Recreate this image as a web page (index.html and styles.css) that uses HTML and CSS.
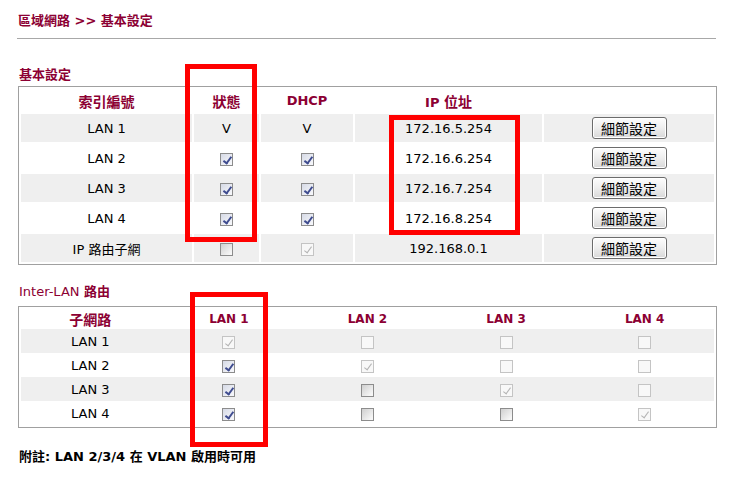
FILE: index.html
```html
<!DOCTYPE html>
<html lang="zh-Hant">
<head>
    <meta charset="UTF-8">
    <title>區域網路 &gt;&gt; 基本設定</title>
    <link rel="stylesheet" href="styles.css">
</head>
<body>
    <div class="page">
        <h1 class="title">區域網路 &gt;&gt; 基本設定</h1>
        <hr class="rule">

        <h2 class="section">基本設定</h2>
        <table class="grid basic">
            <thead>
                <tr>
                    <th class="c-idx"><span class="zh">索引編號</span></th>
                    <th class="c-state"><span class="zh">狀態</span></th>
                    <th class="c-dhcp">DHCP</th>
                    <th class="c-ip">IP <span class="zh">位址</span></th>
                    <th></th>
                </tr>
            </thead>
            <tbody>
                <tr class="odd">
                    <td>LAN 1</td>
                    <td>V</td>
                    <td>V</td>
                    <td>172.16.5.254</td>
                    <td><button class="btn">細節設定</button></td>
                </tr>
                <tr>
                    <td>LAN 2</td>
                    <td><span class="cb on"></span></td>
                    <td><span class="cb on"></span></td>
                    <td>172.16.6.254</td>
                    <td><button class="btn">細節設定</button></td>
                </tr>
                <tr class="odd">
                    <td>LAN 3</td>
                    <td><span class="cb on"></span></td>
                    <td><span class="cb on"></span></td>
                    <td>172.16.7.254</td>
                    <td><button class="btn">細節設定</button></td>
                </tr>
                <tr>
                    <td>LAN 4</td>
                    <td><span class="cb on"></span></td>
                    <td><span class="cb on"></span></td>
                    <td>172.16.8.254</td>
                    <td><button class="btn">細節設定</button></td>
                </tr>
                <tr class="odd">
                    <td>IP 路由子網</td>
                    <td><span class="cb"></span></td>
                    <td><span class="cb on dis"></span></td>
                    <td>192.168.0.1</td>
                    <td><button class="btn">細節設定</button></td>
                </tr>
            </tbody>
        </table>

        <h2 class="section"><span class="lat">Inter-LAN</span> 路由</h2>
        <table class="grid inter">
            <thead>
                <tr>
                    <th><span class="zh">子網路</span></th>
                    <th>LAN 1</th>
                    <th>LAN 2</th>
                    <th>LAN 3</th>
                    <th>LAN 4</th>
                </tr>
            </thead>
            <tbody>
                <tr class="odd">
                    <td>LAN 1</td>
                    <td><span class="cb on dis"></span></td>
                    <td><span class="cb dis"></span></td>
                    <td><span class="cb dis"></span></td>
                    <td><span class="cb dis"></span></td>
                </tr>
                <tr>
                    <td>LAN 2</td>
                    <td><span class="cb on"></span></td>
                    <td><span class="cb on dis"></span></td>
                    <td><span class="cb dis"></span></td>
                    <td><span class="cb dis"></span></td>
                </tr>
                <tr class="odd">
                    <td>LAN 3</td>
                    <td><span class="cb on"></span></td>
                    <td><span class="cb"></span></td>
                    <td><span class="cb on dis"></span></td>
                    <td><span class="cb dis"></span></td>
                </tr>
                <tr>
                    <td>LAN 4</td>
                    <td><span class="cb on"></span></td>
                    <td><span class="cb"></span></td>
                    <td><span class="cb"></span></td>
                    <td><span class="cb on dis"></span></td>
                </tr>
            </tbody>
        </table>

        <p class="note">附註: LAN 2/3/4 在 VLAN 啟用時可用</p>

        <!-- red highlight frames drawn over the tables -->
        <div class="mark mark-state"></div>
        <div class="mark mark-ip"></div>
        <div class="mark mark-lan1"></div>
    </div>
</body>
</html>
```

FILE: styles.css
```css
* {
    margin: 0;
    padding: 0;
    box-sizing: border-box;
}

body {
    font-family: 'DejaVu Sans', 'Noto Sans CJK TC', sans-serif;
    font-size: 13px;
    color: #000;
    background: #fff;
}

.page {
    position: relative;
    padding: 13px 17px 0 17px;
    width: 733px;
    height: 479px;
}

.title {
    font-size: 13px;
    line-height: 16px;
    font-weight: bold;
    color: #8c0033;
    padding-left: 1px;
}

.rule {
    border: none;
    border-top: 1px solid #a8a8a8;
    margin-top: 9px;
}

.section {
    font-size: 13px;
    line-height: 16px;
    font-weight: bold;
    color: #8c0033;
    padding-left: 2px;
    margin-top: 28px;
}

.section .lat {
    font-weight: normal;
}

.zh {
    font-size: 14px;
}

.grid {
    width: 699px;
    margin-left: 1px;
    border: 1px solid #a0a0a0;
    table-layout: fixed;
    text-align: center;
}

.grid th {
    color: #8c0033;
    font-weight: bold;
    padding: 0;
}

.grid td {
    padding: 0;
    vertical-align: middle;
}

.grid tr.odd td {
    background: #efefef;
}

/* basic settings table */
.basic {
    margin-top: 3px;
    border-spacing: 2px;
}

.basic th {
    height: 23px;
    font-size: 13px;
}

.basic td {
    height: 28px;
}

.basic .c-idx { width: 171px; }
.basic .c-state { width: 65px; }
.basic .c-dhcp { width: 92px; }
.basic .c-ip { width: 187px; }

.btn {
    width: 75px;
    height: 22px;
    font-family: 'Noto Sans CJK TC', sans-serif;
    font-size: 14px;
    color: #000;
    border: 1px solid #6c6c6c;
    border-radius: 3px;
    background: linear-gradient(#fdfdfd, #eeeeee 50%, #d8d8d8);
    box-shadow: inset 0 0 0 1px #fff;
    vertical-align: middle;
    line-height: 18px;
}

/* inter-lan table */
.inter {
    margin-top: 6px;
    border-spacing: 0;
    padding: 2px;
}

.inter th {
    height: 20px;
    font-size: 12px;
}

.inter td {
    height: 24px;
}

.basic + .section {
    margin-top: 19px;
}

/* checkboxes */
.cb {
    display: inline-block;
    position: relative;
    width: 13px;
    height: 13px;
    border: 1px solid #8c8c8c;
    background: linear-gradient(135deg, #cfcfcf, #f6f6f6 85%);
    vertical-align: middle;
}

.cb.on {
    background: linear-gradient(135deg, #d6dae6, #f4f5f9 85%);
}

.cb.dis {
    border-color: #c4c4c4;
    background: #f8f8f8;
}

.cb.on::after {
    content: '';
    position: absolute;
    left: 4px;
    top: 1px;
    width: 3px;
    height: 7px;
    border-right: 2px solid #3f4c8f;
    border-bottom: 2px solid #3f4c8f;
    transform: rotate(36deg);
}

.cb.on.dis::after {
    border-right: 1px solid #b4b4b4;
    border-bottom: 1px solid #b4b4b4;
}

.note {
    font-weight: bold;
    line-height: 16px;
    margin-top: 21px;
    padding-left: 2px;
}

/* red frames */
.mark {
    position: absolute;
    border: 5px solid #f00;
}

.mark-state {
    left: 185px;
    top: 64px;
    width: 72px;
    height: 178px;
}

.mark-ip {
    left: 389px;
    top: 115px;
    width: 131px;
    height: 120px;
}

.mark-lan1 {
    left: 190px;
    top: 292px;
    width: 78px;
    height: 155px;
}
```
